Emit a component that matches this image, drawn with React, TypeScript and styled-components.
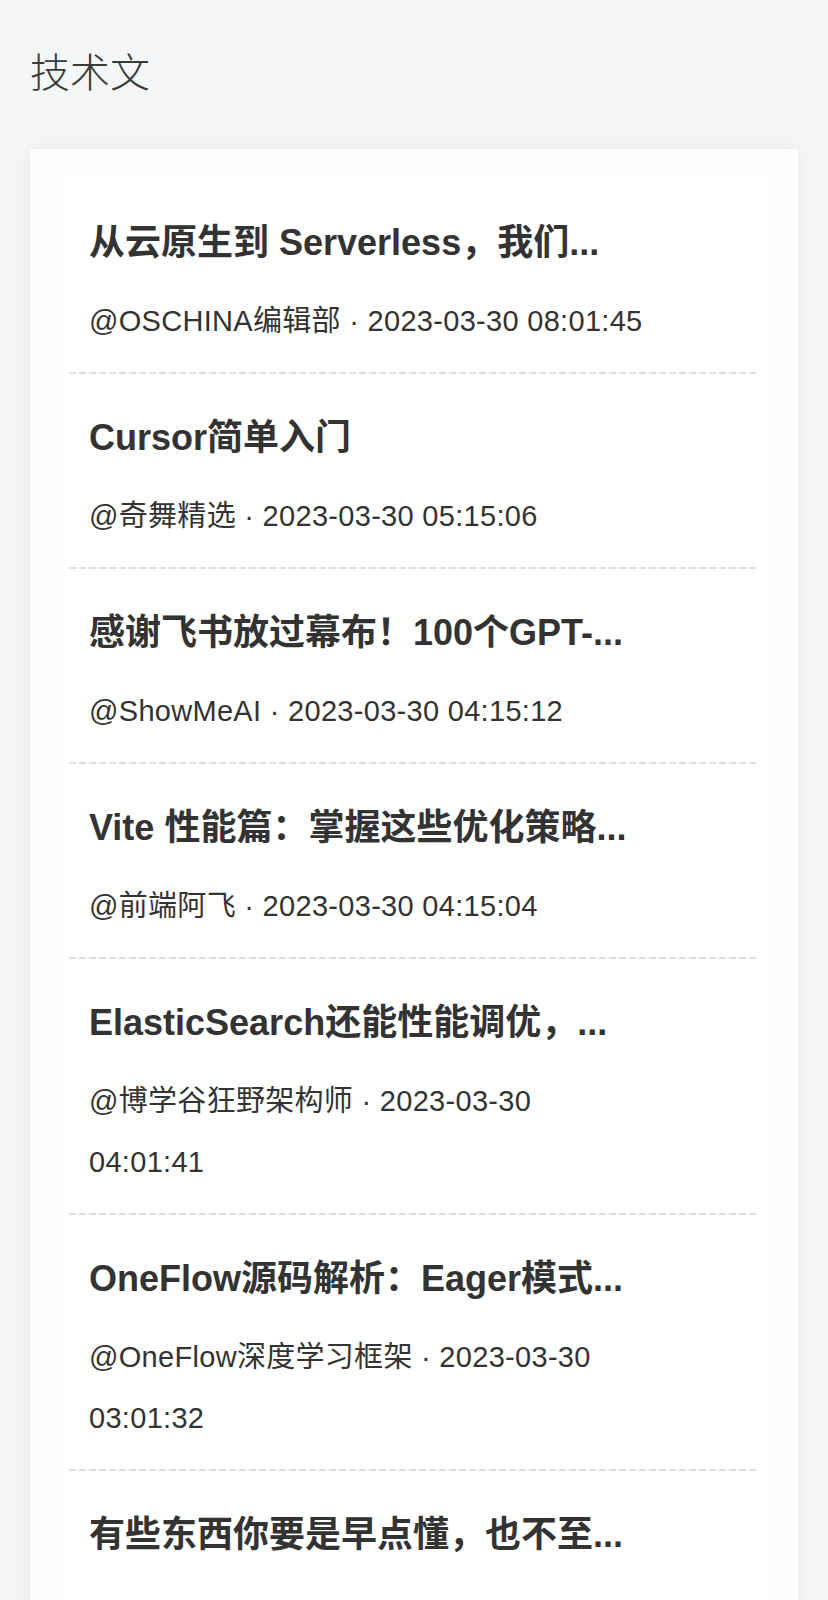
import { createGlobalStyle, styled } from 'styled-components';

const articles = [
    { id: '1', title: '从云原生到 Serverless，我们...', author: 'OSCHINA编辑部', time: '2023-03-30 08:01:45' },
    { id: '2', title: 'Cursor简单入门', author: '奇舞精选', time: '2023-03-30 05:15:06' },
    { id: '3', title: '感谢飞书放过幕布！100个GPT-...', author: 'ShowMeAI', time: '2023-03-30 04:15:12' },
    { id: '4', title: 'Vite 性能篇：掌握这些优化策略...', author: '前端阿飞', time: '2023-03-30 04:15:04' },
    { id: '5', title: 'ElasticSearch还能性能调优，...', author: '博学谷狂野架构师', time: '2023-03-30 04:01:41' },
    { id: '6', title: 'OneFlow源码解析：Eager模式...', author: 'OneFlow深度学习框架', time: '2023-03-30 03:01:32' },
    { id: '7', title: '有些东西你要是早点懂，也不至...' },
];

const GlobalStyle = createGlobalStyle`
    html, body {
        margin: 0;
        padding: 0;
        background: #f5f6f8;
    }
    body {
        font-family: "Liberation Sans", "Noto Sans CJK SC", sans-serif;
        color: #333;
    }
`;

const Page = styled.main`
    height: 100vh;
    overflow: hidden;
    display: flex;
    flex-direction: column;
    padding: 0 30px;
    box-sizing: border-box;
`;

const Heading = styled.h1`
    margin: 46px 0 55px 0;
    font-size: 40px;
    line-height: 48px;
    font-weight: 300;
    font-family: "Noto Sans CJK SC", sans-serif;
    color: #3a3a3a;
`;

const Card = styled.section`
    flex: 1 0 auto;
    background: #fdfdfd;
    box-shadow: 0 0 22px rgba(0, 0, 0, 0.06);
    padding: 30px 30px 40px 32px;
`;

const List = styled.ul`
    list-style: none;
    margin: 0;
    padding: 0 10px 0 7px;
    background: #fff;
`;

const Item = styled.li`
    position: relative;
    padding: 40px 20px 22px;

    &::after {
        content: '';
        position: absolute;
        left: 0;
        right: 0;
        bottom: 0;
        height: 2px;
        background: repeating-linear-gradient(to right, #dedede 0 7px, transparent 7px 10px);
    }
`;

const Title = styled.h2`
    margin: 0 0 24px;
    max-width: 600px;
    font-size: 36px;
    line-height: 48px;
    font-weight: 700;
    color: #333;
    white-space: nowrap;
    overflow: hidden;
    text-overflow: ellipsis;
`;

const Meta = styled.p`
    margin: 0;
    max-width: 558px;
    font-size: 29px;
    line-height: 61px;
    letter-spacing: 0.3px;
    color: #333;
`;

function App() {
    return (
        <>
            <GlobalStyle />
            <Page>
                <Heading>技术文</Heading>
                <Card>
                    <List>
                        {articles.map(item => (
                            <Item key={item.id}>
                                <Title>{item.title}</Title>
                                {item.author && <Meta>{`@${item.author} · ${item.time}`}</Meta>}
                            </Item>
                        ))}
                    </List>
                </Card>
            </Page>
        </>
    );
}

export default App;
